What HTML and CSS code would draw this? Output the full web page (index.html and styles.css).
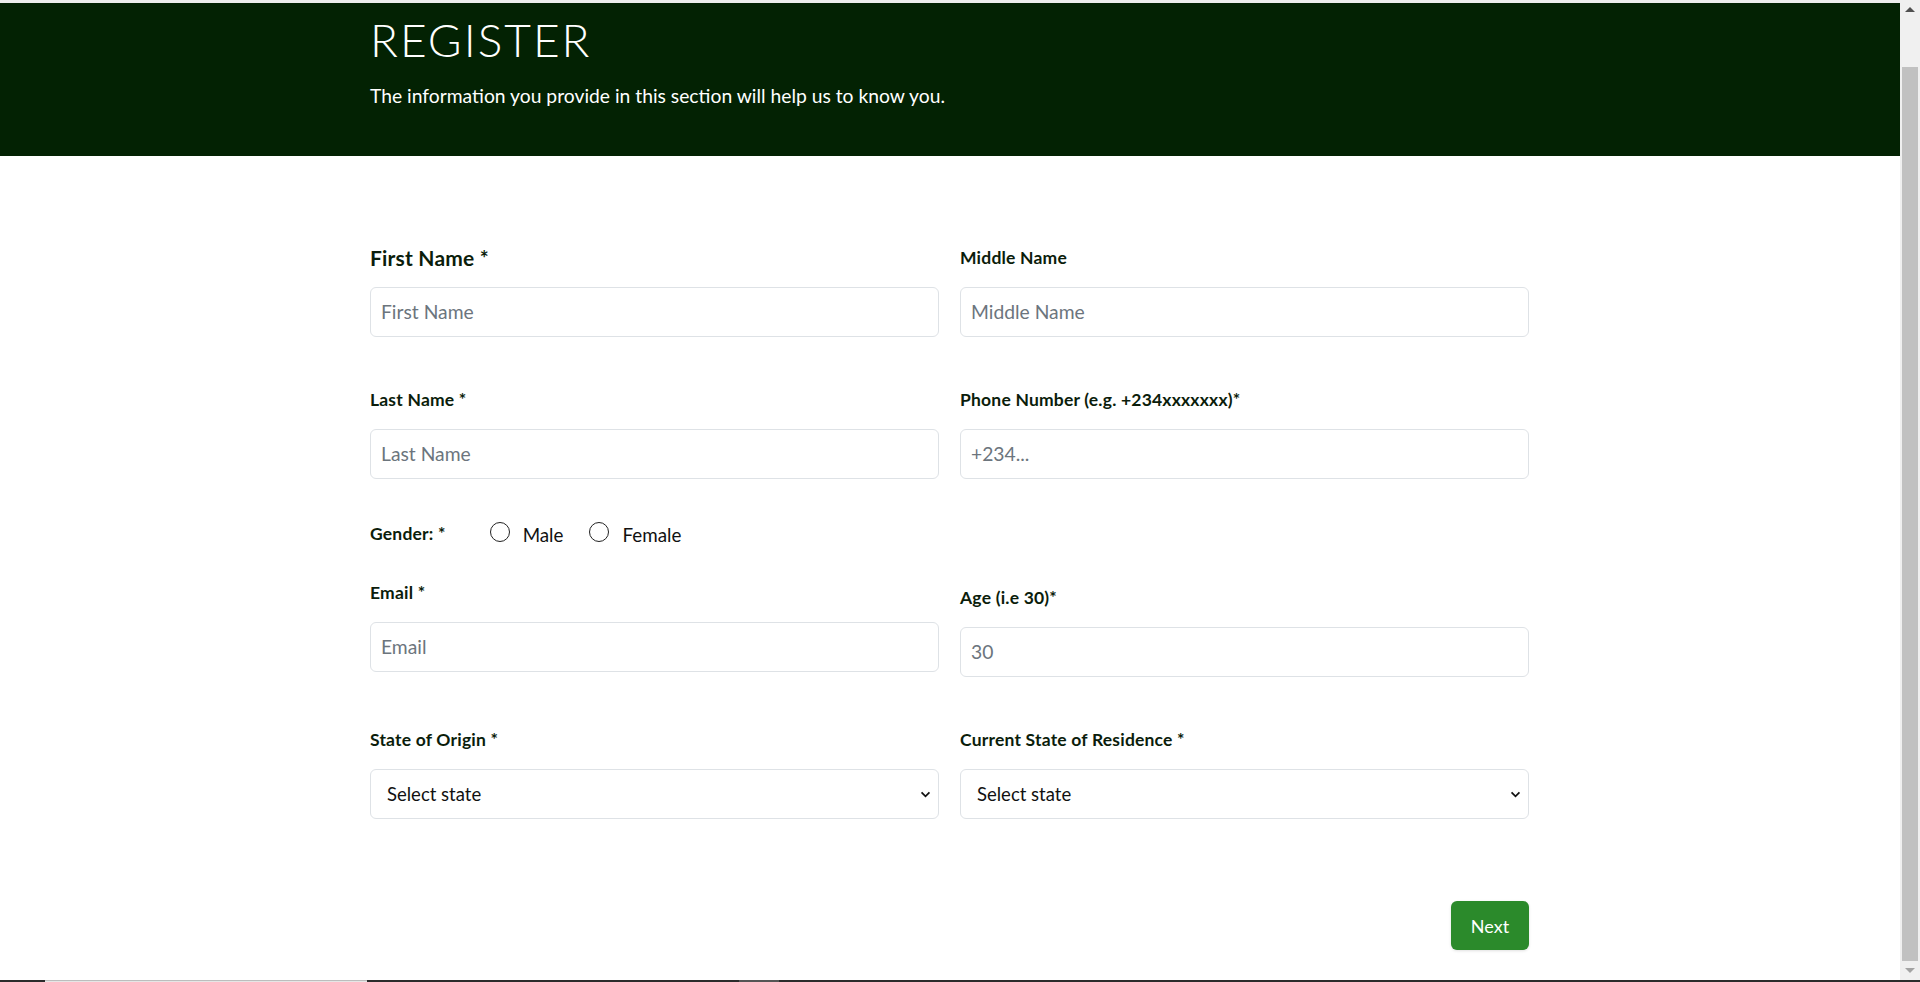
FILE: index.html
```html
<!DOCTYPE html>
<html lang="en">
<head>
<meta charset="utf-8">
<title>Register</title>
<link rel="stylesheet" href="styles.css">
</head>
<body>
<div class="screen">
  <div class="window">
    <main class="page">
      <header class="hero">
        <div class="container">
          <h1 class="hero-title">REGISTER</h1>
          <p class="hero-sub">The information you provide in this section will help us to know you.</p>
        </div>
      </header>
      <form class="form container">
        <div class="row">
          <div class="field">
            <label class="label label-lg" for="fn">First Name *</label>
            <input class="control" id="fn" type="text" placeholder="First Name">
          </div>
          <div class="field">
            <label class="label" for="mn">Middle Name</label>
            <input class="control" id="mn" type="text" placeholder="Middle Name">
          </div>
        </div>
        <div class="row row-before-gender">
          <div class="field">
            <label class="label" for="ln">Last Name *</label>
            <input class="control" id="ln" type="text" placeholder="Last Name">
          </div>
          <div class="field">
            <label class="label" for="ph">Phone Number (e.g. +234xxxxxxx)*</label>
            <input class="control" id="ph" type="text" placeholder="+234...">
          </div>
        </div>
        <div class="gender">
          <span class="label gender-label">Gender: *</span>
          <label class="radio"><input type="radio" name="gender" class="radio-input"><span>Male</span></label>
          <label class="radio"><input type="radio" name="gender" class="radio-input"><span>Female</span></label>
        </div>
        <div class="row">
          <div class="field">
            <label class="label" for="em">Email *</label>
            <input class="control" id="em" type="email" placeholder="Email">
          </div>
          <div class="field field-shift">
            <label class="label" for="ag">Age (i.e 30)*</label>
            <input class="control" id="ag" type="text" placeholder="30">
          </div>
        </div>
        <div class="row row-last">
          <div class="field">
            <label class="label" for="so">State of Origin *</label>
            <div class="select-wrap">
              <select class="control select" id="so"><option>Select state</option></select>
              <svg class="chevron" viewBox="0 0 12 8" width="11" height="7"><path d="M1.5 1.5 6 6l4.5-4.5" fill="none" stroke="#111" stroke-width="2"/></svg>
            </div>
          </div>
          <div class="field">
            <label class="label" for="sr">Current State of Residence *</label>
            <div class="select-wrap">
              <select class="control select" id="sr"><option>Select state</option></select>
              <svg class="chevron" viewBox="0 0 12 8" width="11" height="7"><path d="M1.5 1.5 6 6l4.5-4.5" fill="none" stroke="#111" stroke-width="2"/></svg>
            </div>
          </div>
        </div>
        <div class="actions">
          <button type="button" class="btn-next">Next</button>
        </div>
      </form>
    </main>
    <div class="scrollbar">
      <div class="sb-arrow sb-up"></div>
      <div class="sb-track"><div class="sb-thumb"></div></div>
      <div class="sb-arrow sb-down"></div>
    </div>
  </div>
  <div class="taskbar">
    <span class="tb-seg tb-dark1"></span>
    <span class="tb-seg tb-light"></span>
    <span class="tb-seg tb-dark2"></span>
    <span class="tb-seg tb-gray"></span>
    <span class="tb-seg tb-rest"></span>
  </div>
</div>
</body>
</html>
```

FILE: styles.css
```css
* { box-sizing: border-box; }

html, body {
  margin: 0;
  padding: 0;
  height: 982px;
  overflow: hidden;
  background: #ffffff;
  font-family: "Lato", "Liberation Sans", sans-serif;
  color: #0b1d0b;
}

.screen {
  height: 982px;
  display: flex;
  flex-direction: column;
}

.window {
  flex: 1;
  display: flex;
  min-height: 0;
}

.page {
  flex: 1;
  min-width: 0;
  border-top: 3px solid #eeeeee;
  background: #ffffff;
  overflow: hidden;
}

.container {
  width: 1160px;
  padding-right: 1px;
  margin: 0 auto;
}

/* Header */
.hero {
  background: #032203;
  height: 153px;
  padding-top: 8px;
  color: #ffffff;
}

.hero-title {
  margin: 0;
  font-size: 46px;
  line-height: 57.6px;
  font-weight: 300;
  letter-spacing: 2px;
}

.hero-sub {
  margin: 13px 0 0;
  font-size: 19.3px;
  line-height: 27px;
  font-weight: 400;
}

/* Form */
.form {
  padding-top: 90px;
}

.row {
  display: grid;
  grid-template-columns: 1fr 1fr;
  column-gap: 21px;
  margin-bottom: 51px;
  align-items: start;
}

.row-before-gender { margin-bottom: 43px; }
.row-last { margin-bottom: 0; }

.field { display: flex; flex-direction: column; }
.field-shift { padding-top: 5px; }

.label {
  display: block;
  font-size: 17.5px;
  line-height: 24px;
  font-weight: 700;
  letter-spacing: 0.2px;
  margin-bottom: 17px;
  color: #0b1d0b;
}

.label-lg { font-size: 21px; }

.control {
  width: 100%;
  height: 50px;
  border: 1px solid #dee2e6;
  border-radius: 6px;
  padding: 0 10px 2px;
  font-family: "Lato", "Liberation Sans", sans-serif;
  font-size: 19.3px;
  font-weight: 400;
  color: #212529;
  background: #ffffff;
  outline: none;
}

.control::placeholder { color: #6c757d; }

.select-wrap { position: relative; }

.select {
  appearance: none;
  -webkit-appearance: none;
  padding: 0 16px;
  font-size: 18.5px;
  color: #111111;
}

.chevron {
  position: absolute;
  right: 8px;
  top: 22px;
  pointer-events: none;
}

/* Gender */
.gender {
  display: flex;
  align-items: center;
  height: 24px;
  margin-bottom: 35px;
}

.gender-label {
  margin: 0 44px 0 0;
}

.radio {
  display: flex;
  align-items: center;
  gap: 13px;
  font-size: 18.8px;
  margin-right: 26px;
  margin-bottom: 5px;
  color: #111111;
}

.radio span { padding-top: 5px; }

.radio-input {
  appearance: none;
  -webkit-appearance: none;
  width: 20px;
  height: 20px;
  margin: 0;
  border: 1.5px solid #222222;
  border-radius: 50%;
  background: #ffffff;
}

/* Button */
.actions {
  display: flex;
  justify-content: flex-end;
  margin-top: 82px;
}

.btn-next {
  width: 78px;
  height: 49px;
  border: none;
  border-radius: 6px;
  background: #2b8a2b;
  color: #ffffff;
  font-family: "Lato", "Liberation Sans", sans-serif;
  font-size: 18px;
  box-shadow: 0 1px 3px rgba(0,0,0,0.12);
}

/* Fake window scrollbar */
.scrollbar {
  width: 20px;
  background: #f0f0f0;
  display: flex;
  flex-direction: column;
  align-items: center;
}

.sb-arrow {
  height: 20px;
  width: 100%;
  display: flex;
  align-items: center;
  justify-content: center;
}

.sb-up::before {
  content: "";
  border-left: 5px solid transparent;
  border-right: 5px solid transparent;
  border-bottom: 5px solid #505050;
}

.sb-down::before {
  content: "";
  border-left: 5px solid transparent;
  border-right: 5px solid transparent;
  border-top: 5px solid #a3a3a3;
}

.sb-track {
  flex: 1;
  width: 100%;
  padding: 47px 2px 0 2px;
}

.sb-thumb {
  height: 894px;
  background: #c1c1c1;
}

/* Bottom edge of the desktop */
.taskbar {
  height: 2px;
  display: flex;
}

.tb-seg { display: block; height: 100%; }
.tb-dark1 { width: 45px; background: #2b2b2b; }
.tb-light { width: 322px; background: #e6e6e6; border-top: 1px solid #bdbdbd; }
.tb-dark2 { width: 372px; background: #2b2b2b; }
.tb-gray { width: 40px; background: #555555; }
.tb-rest { flex: 1; background: #2b2b2b; }
```
